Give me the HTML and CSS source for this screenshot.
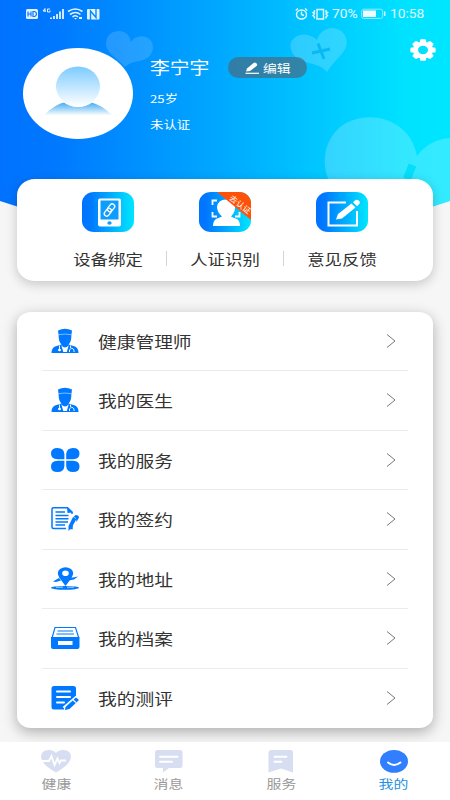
FILE: index.html
```html
<!DOCTYPE html>
<html lang="zh-CN">
<head>
<meta charset="utf-8">
<title>我的</title>
<link rel="stylesheet" href="styles.css">
</head>
<body>
<svg class="defs" width="0" height="0">
  <defs>
    <linearGradient id="sky"><stop offset="0" stop-color="#0072ff"/><stop offset=".12" stop-color="#0078ff"/><stop offset=".5" stop-color="#00aaff"/><stop offset=".9" stop-color="#00e2ff"/><stop offset="1" stop-color="#00e6ff"/></linearGradient>
    <linearGradient id="tile"><stop offset="0" stop-color="#0072ff"/><stop offset=".15" stop-color="#0078ff"/><stop offset="1" stop-color="#00e6ff"/></linearGradient>
    <linearGradient id="head" x2="0" y2="1"><stop offset="0" stop-color="#7dcbff"/><stop offset="1" stop-color="#fff"/></linearGradient>
    <linearGradient id="torso" x2="0" y2="1"><stop offset="0" stop-color="#3fa9f0"/><stop offset=".85" stop-color="#fff"/></linearGradient>
    <symbol id="doctor" viewBox="0 0 28 26" preserveAspectRatio="none">
      <path fill="#0078ff" d="M7 2.500Q14 -.8 21 2.500L20.300 8Q20.500 13.500 17.500 16.500L24 18.500Q27.500 20 27.500 25H.5Q.5 20 4 18.500L10.500 16.500Q7.500 13.500 7.700 8Z"/>
      <path fill="none" stroke="#fff" stroke-width=".5" d="M7.500 6.700Q14 5.400 20.500 6.700"/>
      <path fill="#fff" d="M10.300 17.200Q14 22 17.700 17.200L15.800 24H12.300Z"/>
      <path fill="none" stroke="#fff" stroke-width=".9" d="M8.500 17.500V21.500M19.500 17.500V20M18.500 24V22Q20.800 18.500 23 22V24"/>
      <ellipse cx="8.500" cy="22" rx="1.500" ry="1.200" fill="#fff"/>
    </symbol>
  </defs>
</svg>
<div class="phone">
  <header class="hero">
    <svg class="hero-bg" viewBox="0 0 450 240">
      <path fill="url(#sky)" d="M0 0H450V201Q225 278 0 201Z"/>
      <path fill="#fff" fill-opacity=".14" d="M125 67C116 57 106 53 106 44C106 34 113 31 119 31C126 31 130 36 131 42C134 37 140 35 146 37C153 40 155 48 151 54C146 63 134 59 125 67Z"/>
      <path fill="#fff" fill-opacity=".18" d="M327 72C318 60 293 66 290.500 47C290 39 297 34 305 34.500C310 35 314 37 317 40C319 32 326 28 333 28C342 29 348 36 346.500 45C345 54 334 60 327 72Z"/>
      <path fill="none" stroke="#08b9f4" stroke-width="3" d="M312 53L330 49M318 43.500L324 59"/>
      <path fill="#fff" fill-opacity=".2" d="M335 190C320 172 322 144 338 129C362 107 410 116 417 156C425 145 436 139 450 138V201Q395 220 335 220Z"/>
      <path fill="none" stroke="#04defa" stroke-width="8" d="M412.500 165L407 179"/>
    </svg>
    <div class="status">
      <svg class="signals" viewBox="0 0 76 14">
        <rect x="1" y="2" width="12" height="10" rx="1.500" fill="#e5f3ff"/>
        <path fill="none" stroke="#0878ff" stroke-width="1.200" d="M3 4.500V9.500M6 4.500V9.500M3 7H6M8 4.500V9.500H9.500Q11.500 9 11.500 7T9.500 4.500Z"/>
        <path fill="none" stroke="#e5f3ff" stroke-width="1" d="M20 5V1.500L18 4H21M25 2H22.500V5H25V3.500"/>
        <path fill="none" stroke="#e5f3ff" stroke-width="1.800" d="M26 12V10.500M29 12V9M32 12V7M35 12V4.500M38 12V2"/>
        <path fill="none" stroke="#e5f3ff" stroke-width="1.600" d="M43 4.500Q50.500 -.5 57.500 4.500M45 7.500Q50.500 3.500 55.500 7.500M47.500 10Q50.500 7.500 53 10"/>
        <path fill="#e5f3ff" d="M49 11H52L50.500 12.500ZM54 10h3v2h-3z"/>
        <rect x="62" y="2" width="12.500" height="10.500" rx="1" fill="#e5f3ff"/>
        <path fill="none" stroke="#078cff" stroke-width="1.400" d="M65.500 13V4L71 10.500V2"/>
      </svg>
      <svg class="alarm" viewBox="0 0 38 14">
        <g fill="none" stroke="#e0fbff" stroke-width="1.400"><ellipse cx="6.500" cy="7.500" rx="5" ry="4.500"/><path d="M.7 3.500L3 1.500M12.300 3.500L10 1.500M6.500 4.500V7.500L9 8.500M22 2.500H28.500V12H22ZM19.500 3V5L18 5.500L19.500 7L18 8.500L19.500 10V11.500M31 3V5L32.500 5.500L31 7L32.500 8.500L31 10V11.500"/></g>
      </svg>
      <span class="wide pct">70%</span>
      <svg class="battery" viewBox="0 0 25 12"><rect x=".7" y="1.200" width="21" height="9.200" rx="2" fill="none" stroke="#8cecff"/><rect x="2" y="2.500" width="13" height="6.500" fill="#effcff"/><path stroke="#d8f9ff" stroke-width="1.500" d="M23.700 3.500V8"/></svg>
      <span class="wide time">10:58</span>
    </div>
    <div class="profile">
      <svg class="avatar" viewBox="0 0 110 91">
        <ellipse cx="55" cy="45.500" rx="55" ry="45.500" fill="#fff"/>
        <path fill="url(#torso)" d="M21 67Q32 56 43 54Q55 60 67 54Q79 57 89 67Q55 73 21 67Z"/>
        <ellipse cx="55" cy="39" rx="22" ry="20" fill="#fff"/>
        <ellipse cx="55" cy="38.500" rx="22" ry="20" fill="url(#head)"/>
      </svg>
      <div class="who">
        <span class="wide name">李宁宇</span>
        <span class="wide age">25岁</span>
        <span class="wide verify">未认证</span>
      </div>
      <div class="edit">
        <svg viewBox="0 0 14 12"><path fill="#fff" d="M1 9.500L2 6.500L8.500 1Q10 0 11 1L12 2Q12.500 3 11.500 4L5 9Z"/><path stroke="#fff" stroke-width="1.200" d="M.5 11.300H14"/></svg>
        <span class="wide">编辑</span>
      </div>
      <svg class="gear" viewBox="-13 -11 26 22" preserveAspectRatio="none">
        <g fill="#fff" transform="scale(1.180 1)"><circle r="8.600"/>
          <g id="teeth"><rect x="-2.600" y="-10.700" width="5.200" height="21.400" rx="1.300"/><rect x="-10.700" y="-2.600" width="21.400" height="5.200" rx="1.300"/></g>
          <use href="#teeth" transform="rotate(45)"/></g>
        <ellipse rx="5" ry="4.200" fill="#05dffc"/>
      </svg>
    </div>
  </header>

  <section class="card shortcuts">
    <div class="shortcut">
      <svg viewBox="0 0 52 40"><rect width="52" height="40" rx="12" ry="11" fill="url(#tile)"/>
        <rect x="16" y="6.500" width="23" height="28" rx="2" fill="#fff"/><rect x="18.500" y="8.500" width="18" height="19" fill="#0c9dff"/><ellipse cx="27.500" cy="31" rx="2.200" ry="1.800" fill="#0c9dff"/>
        <g fill="none" stroke="#fff" stroke-width="1.300"><rect x="26.500" y="11.500" width="5" height="8.500" rx="2.500" transform="rotate(38 29 16)"/><rect x="23.500" y="16" width="5" height="8.500" rx="2.500" transform="rotate(38 26 20)"/></g></svg>
      <span class="wide">设备绑定</span>
    </div>
    <div class="shortcut">
      <svg viewBox="0 0 52 40"><defs><clipPath id="round"><rect width="52" height="40" rx="12" ry="11"/></clipPath></defs>
        <g clip-path="url(#round)"><rect width="52" height="40" fill="url(#tile)"/>
        <path fill="none" stroke="#fff" stroke-width="1.800" d="M18 8.500H13.500V13M13.500 20V24.500H18M36 24.500H40.500V20"/>
        <path fill="#fff" d="M14 34Q14 29 17 27Q20 25.500 23 24.500Q18 20 18 15Q19 7.500 27 7.500Q35 7.500 36 15Q36.500 20 32 24.500Q35 26 38 27Q41 29 41 34Z"/>
        <path fill="#ff5208" d="M18 0H52V28Z"/></g>
        <text class="ribbon" transform="translate(29.500 7) rotate(38) scale(1.080 1)">去认证</text></svg>
      <span class="wide">人证识别</span>
    </div>
    <div class="shortcut">
      <svg viewBox="0 0 52 40"><rect width="52" height="40" rx="12" ry="11" fill="url(#tile)"/>
        <path fill="none" stroke="#fff" stroke-width="2" d="M30 10.500H12.500V33.500H41V19"/>
        <path fill="#fff" d="M20 27.500L22 22L35.500 11.500L39.500 15.500L26 26.500ZM37 10.300L39.500 8Q42 7 44 10Q44 12 41 14.300Z"/></svg>
      <span class="wide">意见反馈</span>
    </div>
  </section>

  <section class="card menu">
    <div class="row"><svg class="icon"><use href="#doctor"/></svg><span class="wide">健康管理师</span><i class="arrow"><svg viewBox="0 0 10 14"><path d="M1 .5L9 7L1 13.500"/></svg></i></div>
    <div class="row"><svg class="icon"><use href="#doctor"/></svg><span class="wide">我的医生</span><i class="arrow"><svg viewBox="0 0 10 14"><path d="M1 .5L9 7L1 13.500"/></svg></i></div>
    <div class="row"><svg class="icon" viewBox="0 0 28 26"><path fill="#0078ff" d="M13.400 12.200V7Q13 1 6.500 1Q0 1 0 6.500T6.500 12.200ZM15.200 12.200V7Q15.600 1 22 1Q28.500 1 28.500 6.500T22 12.200ZM13.400 13.800V19Q13 25 6.500 25Q0 25 0 19.500T6.500 13.800ZM15.200 13.800V19Q15.600 25 22 25Q28.500 25 28.500 19.500T22 13.800Z"/></svg><span class="wide">我的服务</span><i class="arrow"><svg viewBox="0 0 10 14"><path d="M1 .5L9 7L1 13.500"/></svg></i></div>
    <div class="row"><svg class="icon" viewBox="0 0 28 26"><path fill="none" stroke="#0078ff" stroke-width="1.500" d="M21 8V6L16.500 1.800H2.500Q1 1.800 1 3V21Q1 22.500 2.500 22.500H15M21 17V22.500H19M4.500 6H14M4.500 9.500H17.500M4.500 12.700H17.500M4.500 16H17M4.500 19H14"/><path fill="#0078ff" d="M16 1L22 6.500L16.500 7ZM22 11L25.500 13L21 21L17.500 25L17.500 20ZM24.500 9Q28 9 28 11.500L25.500 16L25 12L22.500 11Z"/></svg><span class="wide">我的签约</span><i class="arrow"><svg viewBox="0 0 10 14"><path d="M1 .5L9 7L1 13.500"/></svg></i></div>
    <div class="row"><svg class="icon" viewBox="0 0 28 26"><path fill="#0078ff" fill-rule="evenodd" d="M14.500 20L8.500 12Q5 6 9 3Q14.500 -.3 20 3Q24 6 20.500 12ZM14.500 4.500A3.300 2.800 0 1 0 14.500 10.100A3.300 2.800 0 1 0 14.500 4.500Z"/><path fill="#0078ff" d="M2 15.500L8 12L10 14.500L5 16ZM19 12L27 10.500L23 13.500L17.500 14.500Z"/><ellipse cx="14" cy="21.800" rx="14" ry="1.900" fill="#0078ff"/><path stroke="#fff" stroke-width=".6" d="M5 21.300H12M16 21.300H23"/></svg><span class="wide">我的地址</span><i class="arrow"><svg viewBox="0 0 10 14"><path d="M1 .5L9 7L1 13.500"/></svg></i></div>
    <div class="row"><svg class="icon" viewBox="0 0 28 26"><path fill="none" stroke="#0078ff" stroke-width="1.200" d="M1 13L4 2.500H24.500L27.800 13M6.500 6H22M5.500 9H23"/><path fill="#0078ff" fill-rule="evenodd" d="M0 12H28.500V22Q28.500 24 26.500 24H2Q0 24 0 22ZM7 16V20H21.500V16Z"/></svg><span class="wide">我的档案</span><i class="arrow"><svg viewBox="0 0 10 14"><path d="M1 .5L9 7L1 13.500"/></svg></i></div>
    <div class="row"><svg class="icon" viewBox="0 0 28 26"><path fill="#0078ff" d="M3 1H22.500Q25 1 25 3.500V12L13 22V24.500H3Q.5 24.500 .5 22V3.500Q.5 1 3 1ZM25 12.500L28 15L18.500 24L14 25L14.500 22Z"/><path fill="none" stroke="#fff" stroke-width="2" stroke-linecap="round" d="M6 6.500H19M6 12H19M6 17.500H13"/><path fill="none" stroke="#fff" stroke-width="1.200" d="M26 10.500L12 22.500M22 15L25 17.500"/></svg><span class="wide">我的测评</span><i class="arrow"><svg viewBox="0 0 10 14"><path d="M1 .5L9 7L1 13.500"/></svg></i></div>
  </section>

  <nav class="tabs">
    <div class="tab"><svg viewBox="0 0 30 23"><path fill="#d7def1" d="M15 22.500Q0 14 0 7Q0 0 8 0Q12.500 0 15 3Q17.500 0 22 0Q30 0 30 7Q30 14 15 22.500Z"/><path fill="none" stroke="#fff" stroke-width="1.800" d="M1 11H8L10.500 6L13.500 15L16.500 8.500L18.500 13L20 10.500H25"/></svg><span class="wide">健康</span></div>
    <div class="tab"><svg viewBox="0 0 30 23"><path fill="#d7def1" d="M3 0H26Q28.500 0 28.500 2.500V15.500Q28.500 18 26 18H15L9 22.500V18H3Q1 18 1 15.500V2.500Q1 0 3 0Z"/><path stroke="#fff" stroke-width="1.900" stroke-linecap="round" d="M6 6.800H23.500M6 11.800H18"/></svg><span class="wide">消息</span></div>
    <div class="tab"><svg viewBox="0 0 30 23"><path fill="#d7def1" d="M5.500 0H24.500Q27 0 27 2.500V22.500L15 18.500L2.500 22.500V2.500Q2.500 0 5.500 0Z"/><path stroke="#fff" stroke-width="1.900" stroke-linecap="round" d="M8.500 6.800H20.500M8.500 11.800H15.500"/></svg><span class="wide">服务</span></div>
    <div class="tab active"><svg viewBox="0 0 30 23"><ellipse cx="15" cy="11.400" rx="14" ry="11.400" fill="#317ffe"/><path fill="none" stroke="#fff" stroke-width="1.900" stroke-linecap="round" d="M9 12.500Q15 17.500 21.500 12.500"/></svg><span class="wide">我的</span></div>
  </nav>
</div>
</body>
</html>
```
FILE: styles.css
```css
* { box-sizing: border-box; }
body { margin: 0; background: #f6f6f6; font-family: "Noto Sans", "Noto Sans CJK SC", sans-serif; color: #333; }
svg { display: block; flex: none; overflow: visible; }
.defs { position: absolute; }
.phone { width: 450px; height: 800px; display: flex; flex-direction: column; overflow: hidden; position: relative; }
.wide { display: block; white-space: nowrap; transform: scaleX(1.2); transform-origin: left center; font-family: "Noto Sans CJK SC", sans-serif; }

.hero { height: 178.500px; position: relative; flex: none; color: #fff; }
.hero-bg { position: absolute; left: 0; top: 0; width: 450px; height: 240px; }
.status { position: relative; height: 28px; padding: 0 25px 0 25px; display: flex; align-items: center; font-size: 12px; color: #e0fbff; }
.signals { width: 76px; height: 14px; }
.alarm { width: 38px; height: 14px; margin-left: auto; }
.status .wide { font-family: Roboto, sans-serif; transform: scaleX(1.150); }
.pct { width: 29px; margin-left: -1px; }
.battery { width: 25px; height: 12px; }
.time { width: 35px; margin-left: 4px; }

.profile { position: relative; display: flex; padding: 20px 14px 0 23px; }
.avatar { width: 110px; height: 91px; }
.who { width: 78px; margin-left: 17px; padding-top: 4px; display: flex; flex-direction: column; }
.name { font-size: 16.500px; line-height: 30px; }
.age { font-size: 11px; line-height: 26px; margin-top: 3px; }
.verify { font-size: 11.200px; line-height: 26px; }
.edit { width: 79px; height: 21px; margin-top: 9px; border-radius: 11px; background: rgba(75, 100, 120, .65); display: flex; align-items: center; padding-left: 17px; font-size: 11.500px; }
.edit svg { width: 14px; height: 12px; margin-right: 4px; }
.gear { width: 26px; height: 22px; margin: -9px 0 0 auto; }

.card { position: relative; margin: 0 17.500px 0 17.300px; background: #fff; flex: none; }
.shortcuts { height: 102px; border-radius: 18px / 16px; box-shadow: 0 3px 12px rgba(0, 0, 0, .2); display: grid; grid-template-columns: repeat(3, 117px); padding: 13px 0 0 32.400px; }
.shortcut { display: flex; flex-direction: column; align-items: center; position: relative; }
.shortcut > svg { width: 52px; height: 40px; }
.shortcut .wide { font-size: 14.500px; line-height: 22px; margin-top: 16px; transform-origin: center; }
.shortcut + .shortcut::before { content: ""; position: absolute; left: -.5px; top: 59px; height: 15px; width: 1px; background: #d4d4d4; }
.ribbon { font: 7.800px "Noto Sans CJK SC", sans-serif; fill: #fff; }

.menu { height: 416.500px; margin-top: 31px; padding: 0 24.500px; border-radius: 14px / 12px; box-shadow: 0 4px 14px rgba(0, 0, 0, .3); }
.row { height: 59.500px; display: flex; align-items: center; border-bottom: 1px solid #ececec; padding: 0 12.500px 0 9px; font-size: 15.600px; }
.row:last-child { border-bottom: 0; }
.icon { width: 28px; height: 26px; margin-right: 19px; }
.arrow { margin-left: auto; }
.arrow svg { width: 10px; height: 14px; fill: none; stroke: #777; stroke-width: 1; }

.tabs { position: relative; margin-top: auto; height: 58px; background: #fff; display: grid; grid-template-columns: repeat(4, 1fr); flex: none; }
.tab { display: flex; flex-direction: column; align-items: center; padding-top: 8px; font-size: 12.400px; color: #999; }
.tab svg { width: 30px; height: 23px; }
.tab .wide { transform-origin: center; line-height: 20px; margin-top: 1px; }
.tab.active { color: #2490df; }
```
